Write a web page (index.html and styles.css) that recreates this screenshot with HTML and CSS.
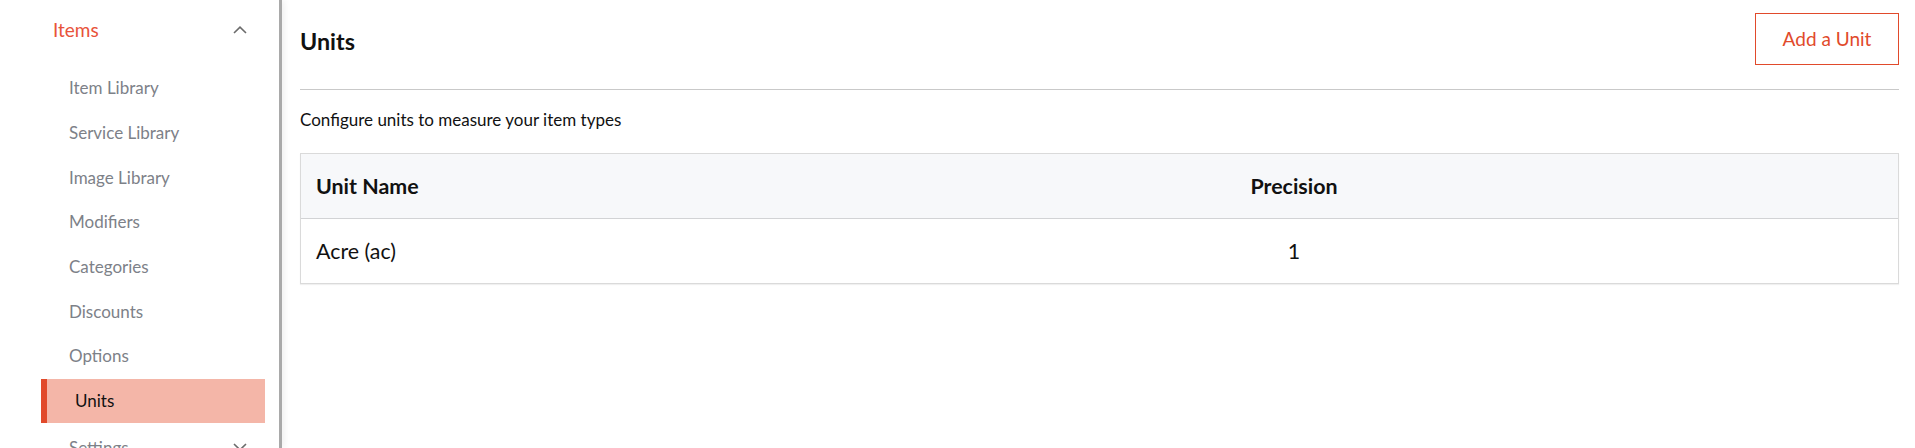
FILE: index.html
```html
<!DOCTYPE html>
<html>
<head><meta charset="utf-8"><link rel="stylesheet" href="styles.css"></head>
<body>
<div class="layout">
  <aside class="sidebar">
    <div class="group">
      <div class="group-head">
        <span class="group-title">Items</span>
        <svg class="chev" width="14" height="8" viewBox="0 0 14 8"><polyline points="1,7 7,1.2 13,7" fill="none" stroke="#6b6b6b" stroke-width="1.6"/></svg>
      </div>
      <ul class="nav">
        <li class="nav-item">Item Library</li>
        <li class="nav-item">Service Library</li>
        <li class="nav-item">Image Library</li>
        <li class="nav-item">Modifiers</li>
        <li class="nav-item">Categories</li>
        <li class="nav-item">Discounts</li>
        <li class="nav-item">Options</li>
        <li class="nav-item active">Units</li>
      </ul>
      <div class="sub-head">
        <span>Settings</span>
        <svg class="chev" width="14" height="8" viewBox="0 0 14 8"><polyline points="1,1 7,6.8 13,1" fill="none" stroke="#6b6b6b" stroke-width="1.6"/></svg>
      </div>
    </div>
  </aside>
  <main class="main">
    <header class="page-head">
      <h1 class="page-title">Units</h1>
      <button class="btn-outline">Add a Unit</button>
    </header>
    <p class="subtitle">Configure units to measure your item types</p>
    <div class="table">
      <div class="row head">
        <div class="cell">Unit Name</div>
        <div class="cell center">Precision</div>
        <div class="cell"></div>
      </div>
      <div class="row">
        <div class="cell">Acre (ac)</div>
        <div class="cell center">1</div>
        <div class="cell"></div>
      </div>
    </div>
  </main>
</div>
</body>
</html>
```
FILE: styles.css
```css
*{box-sizing:border-box}
html,body{margin:0;padding:0;background:#fff}
body{font-family:Lato,"Open Sans",sans-serif;color:#111;overflow:hidden}
.layout{display:flex;height:448px}
.sidebar{width:282px;flex:none;border-right:3px solid #a9a9a9;box-shadow:2px 0 7px rgba(0,0,0,0.07);position:relative;z-index:1;background:#fff}
.group{margin-left:41px;width:224px}
.group-head{height:60px;display:flex;align-items:center;justify-content:space-between;padding:0 18px 0 12px}
.group-title{font-size:19px;color:#e8533a;line-height:22px}
.chev{display:block}
.nav{list-style:none;margin:6px 0 0;padding:0}
.nav-item{height:44.7px;display:flex;align-items:center;padding-left:28px;font-size:17px;color:#7d8188;line-height:20px}
.nav-item.active{background:#f4b6a8;border-left:6px solid #e14a2b;color:#111;height:44px;margin-top:0}
.sub-head{height:44.7px;display:flex;align-items:center;justify-content:space-between;padding:0 18px 0 28px;font-size:17px;color:#7d8188;margin-top:2px}
.main{flex:1;padding:0 16px 0 18px;min-width:0}
.page-head{display:flex;align-items:center;justify-content:space-between;padding:13px 0 24px;border-bottom:1px solid #c9c9c9}
.page-title{margin:0;padding-top:4px;font-size:23.3px;font-weight:700;line-height:28px}
.btn-outline{width:144px;height:52px;border:1.5px solid #e14a2b;background:#fff;color:#e14a2b;font-family:inherit;font-size:19px;padding:0;line-height:22px}
.subtitle{margin:20px 0 0;font-size:17px;line-height:20px;height:20px}
.table{margin-top:23px;border:1px solid #dadada;box-shadow:0 1px 1px rgba(0,0,0,0.06)}
.row{display:grid;grid-template-columns:893px 200px 1fr;height:64px;align-items:center;font-size:21.4px}
.row.head{background:#f7f8fa;border-bottom:1px solid #d2d3d5;height:65px;font-weight:700;font-size:21.4px}
.cell{padding-left:15px}
.cell.center{text-align:center;padding-left:0}
```
